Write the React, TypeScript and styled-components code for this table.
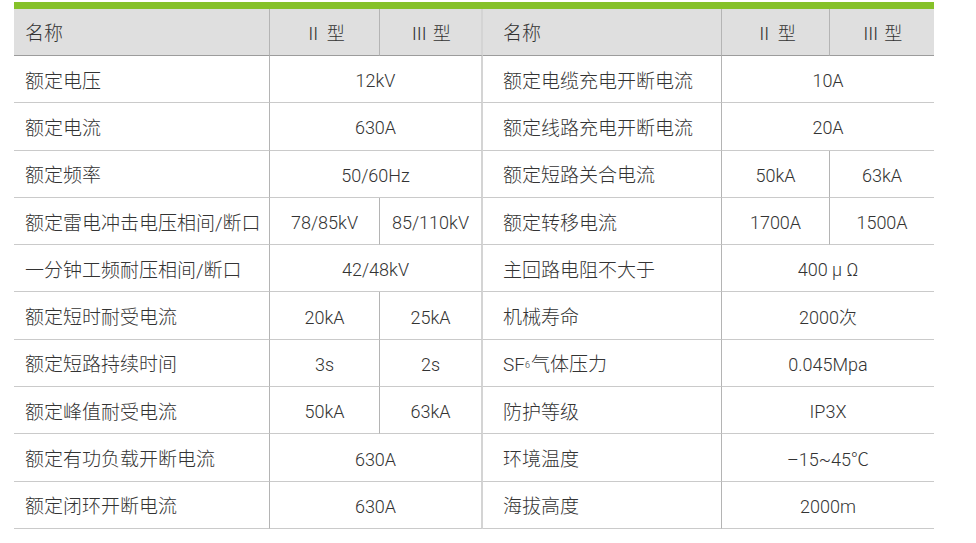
import styled, { createGlobalStyle } from "styled-components";
import type { ReactNode } from "react";

const GlobalStyle = createGlobalStyle`
  body {
    margin: 0;
    background: #ffffff;
    font-family: "Roboto", "Noto Sans CJK SC", sans-serif;
  }
`;

const Sub = styled.sub`
  font-size: 9px;
  vertical-align: -4px;
  margin: 0 1px 0 0;
`;

type Cell = { text: ReactNode; span?: number };
type Row = { left: Cell[]; right: Cell[] };

const rows: Row[] = [
  {
    left: [{ text: "额定电压" }, { text: "12kV", span: 2 }],
    right: [{ text: "额定电缆充电开断电流" }, { text: "10A", span: 2 }],
  },
  {
    left: [{ text: "额定电流" }, { text: "630A", span: 2 }],
    right: [{ text: "额定线路充电开断电流" }, { text: "20A", span: 2 }],
  },
  {
    left: [{ text: "额定频率" }, { text: "50/60Hz", span: 2 }],
    right: [{ text: "额定短路关合电流" }, { text: "50kA" }, { text: "63kA" }],
  },
  {
    left: [{ text: "额定雷电冲击电压相间/断口" }, { text: "78/85kV" }, { text: "85/110kV" }],
    right: [{ text: "额定转移电流" }, { text: "1700A" }, { text: "1500A" }],
  },
  {
    left: [{ text: "一分钟工频耐压相间/断口" }, { text: "42/48kV", span: 2 }],
    right: [{ text: "主回路电阻不大于" }, { text: "400 μ Ω", span: 2 }],
  },
  {
    left: [{ text: "额定短时耐受电流" }, { text: "20kA" }, { text: "25kA" }],
    right: [{ text: "机械寿命" }, { text: "2000次", span: 2 }],
  },
  {
    left: [{ text: "额定短路持续时间" }, { text: "3s" }, { text: "2s" }],
    right: [
      {
        text: (
          <>
            SF<Sub>6</Sub>气体压力
          </>
        ),
      },
      { text: "0.045Mpa", span: 2 },
    ],
  },
  {
    left: [{ text: "额定峰值耐受电流" }, { text: "50kA" }, { text: "63kA" }],
    right: [{ text: "防护等级" }, { text: "IP3X", span: 2 }],
  },
  {
    left: [{ text: "额定有功负载开断电流" }, { text: "630A", span: 2 }],
    right: [{ text: "环境温度" }, { text: "–15~45℃", span: 2 }],
  },
  {
    left: [{ text: "额定闭环开断电流" }, { text: "630A", span: 2 }],
    right: [{ text: "海拔高度" }, { text: "2000m", span: 2 }],
  },
];

type CellProps = {
  side?: "left" | "right";
  $center?: boolean;
  $divider?: boolean;
  $last?: boolean;
  $span?: number;
};

const Page = styled.div`
  padding: 2px 42px 0 14px;
`;

const Table = styled.div`
  display: grid;
  grid-template-columns: 256px 110px 103px 239px 108px 104px;
  grid-template-rows: 47px repeat(10, 47.3px);
  border-top: 7px solid #86c129;
  color: #333333;
`;

// name cells hold chinese text, value cells mostly latin numbers
const BaseCell = styled.div<CellProps>`
  display: flex;
  align-items: center;
  justify-content: ${({ $center }) => ($center ? "center" : "flex-start")};
  padding-left: ${({ side }) =>
    side === "left" ? "11px" : side === "right" ? "20px" : "0"};
  padding-top: ${({ $center }) => ($center ? "4px" : "5px")};
  grid-column: span ${({ $span }) => $span || 1};
  border-right: ${({ $divider, $last }) =>
    $last ? "none" : $divider ? "2px solid #d4d4d4" : "1px solid #b4b4b4"};
  font-size: ${({ side }) => (side ? "19px" : "18px")};
  font-weight: 300;
  line-height: 24px;
  white-space: nowrap;
  box-sizing: border-box;
`;

const HeadCell = styled(BaseCell)`
  background: #dfdfdf;
  border-bottom: 1px solid #9c9c9c;
  padding-top: 4px;
  font-weight: 300;
`;

const BodyCell = styled(BaseCell)`
  border-bottom: 1px solid #cacaca;
`;

const RowGroup = ({ row }: { row: Row }) => {
  const leftEnd = row.left.length - 1;
  const rightEnd = row.right.length - 1;
  return (
    <>
      {row.left.map((c, j) => (
        <BodyCell
          key={"l" + j}
          side={j === 0 ? "left" : undefined}
          $center={j > 0}
          $span={c.span || 1}
          $divider={j === leftEnd}
        >
          {c.text}
        </BodyCell>
      ))}
      {row.right.map((c, j) => (
        <BodyCell
          key={"r" + j}
          side={j === 0 ? "right" : undefined}
          $center={j > 0}
          $span={c.span || 1}
          $last={j === rightEnd}
        >
          {c.text}
        </BodyCell>
      ))}
    </>
  );
};

const App = () => {
  return (
    <Page>
      <GlobalStyle />
      <Table>
        <HeadCell side="left">名称</HeadCell>
        <HeadCell $center>Ⅱ 型</HeadCell>
        <HeadCell $center $divider>
          Ⅲ 型
        </HeadCell>
        <HeadCell side="right">名称</HeadCell>
        <HeadCell $center>Ⅱ 型</HeadCell>
        <HeadCell $center $last>
          Ⅲ 型
        </HeadCell>
        {rows.map((row, i) => (
          <RowGroup key={i} row={row} />
        ))}
      </Table>
    </Page>
  );
};

export default App;
